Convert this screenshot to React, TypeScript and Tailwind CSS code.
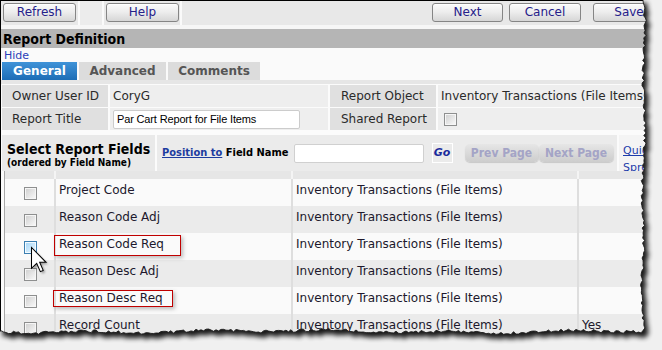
import React from "react";

const rows = [
  { name: "Project Code", extra: "", hover: false },
  { name: "Reason Code Adj", extra: "", hover: false },
  { name: "Reason Code Req", extra: "", hover: true },
  { name: "Reason Desc Adj", extra: "", hover: false },
  { name: "Reason Desc Req", extra: "", hover: false },
  { name: "Record Count", extra: "Yes", hover: false },
];

function makeEdge() {
  let s = 98765;
  const rnd = () => {
    s = (s * 16807) % 2147483647;
    return s / 2147483647;
  };
  const right: string[] = [];
  for (let y = -2; y <= 331; y += 2.5) {
    const x = 643.5 + Math.sin(y / 17) * 1.1 + Math.sin(y / 53) * 0.9 + (rnd() - 0.5) * 3;
    right.push(`${x.toFixed(1)},${y.toFixed(1)}`);
  }
  const bottom: string[] = [];
  for (let x = 641; x >= -3; x -= 2.5) {
    const y = 331.5 + Math.sin(x / 19) * 1.0 + Math.sin(x / 61) * 0.9 + (rnd() - 0.5) * 3;
    bottom.push(`${x.toFixed(1)},${y.toFixed(1)}`);
  }
  const pts = [...right, ...bottom];
  const paper = `M-3,-3 L${pts.join(" L")} L-3,-3 Z`;
  return { paper, pts: pts.join(" ") };
}

const EDGE = makeEdge();

function TornEdge() {
  const outside = `M-20,-20 H700 V380 H-20 Z ${EDGE.paper}`;
  return (
    <svg className="absolute left-0 top-0 pointer-events-none" width="662" height="350" viewBox="0 0 662 350">
      <defs>
        <filter id="blurShadow" filterUnits="userSpaceOnUse" x="-30" y="-30" width="730" height="420">
          <feGaussianBlur stdDeviation="2.5" />
        </filter>
        <clipPath id="outsideClip">
          <path d={outside} clipRule="evenodd" />
        </clipPath>
      </defs>
      <path d={outside} fill="#f0f0f0" fillRule="evenodd" />
      <g clipPath="url(#outsideClip)">
        <path d={EDGE.paper} transform="translate(4,5)" fill="#000" opacity="0.9" filter="url(#blurShadow)" />
      </g>
      <polyline points={EDGE.pts} fill="none" stroke="#1c1c1c" strokeWidth="0.9" />
    </svg>
  );
}

function Checkbox({ hover = false }: { hover?: boolean }) {
  return (
    <div
      className={
        hover
          ? "w-[13px] h-[13px] shrink-0 border border-[#3c7fb1] bg-[#f4fbff] p-[1px]"
          : "w-[13px] h-[13px] shrink-0 border border-[#8e8f8f] bg-[#f6f6f6] p-[1px]"
      }
    >
      <div
        className={
          hover
            ? "w-full h-full bg-gradient-to-br from-[#a9d8f8] to-[#e6f5fe]"
            : "w-full h-full bg-gradient-to-br from-[#d2d2d2] to-[#f7f7f7]"
        }
      />
    </div>
  );
}

function Cursor() {
  return (
    <svg className="absolute left-[29px] top-[246px] pointer-events-none" width="22" height="30" viewBox="0 0 22 30">
      <defs>
        <filter id="curShadow" x="-50%" y="-50%" width="200%" height="200%">
          <feGaussianBlur stdDeviation="0.9" />
        </filter>
      </defs>
      <g transform="translate(2.5,1.5) scale(1.3)">
        <path
          d="M0,0 L0,16 L4,12.2 L6.8,18.6 L9,17.6 L6.3,11.4 L11.2,11.4 Z"
          transform="translate(1.5,1.5)"
          fill="#000"
          opacity="0.35"
          filter="url(#curShadow)"
        />
        <path
          d="M0,0 L0,16 L4,12.2 L6.8,18.6 L9,17.6 L6.3,11.4 L11.2,11.4 Z"
          fill="#fff"
          stroke="#000"
          strokeWidth="0.8"
          strokeLinejoin="miter"
        />
      </g>
    </svg>
  );
}

const btn =
  "h-[19px] shrink-0 rounded-[3px] border border-[#858585] bg-gradient-to-b from-[#fbfbfb] via-[#ececec] to-[#d6d6d6] text-[12px] leading-[17px] text-[#25208a] flex items-center justify-center shadow-[inset_0_1px_0_#ffffff]";

const cond = "font-['DejaVu_Sans_Condensed','DejaVu_Sans',sans-serif] [font-stretch:semi-condensed] font-bold";

export default function App() {
  return (
    <div className="relative w-[662px] h-[350px] overflow-hidden bg-[#f0f0f0] font-['DejaVu_Sans',sans-serif] text-[#1e1e1e]">
      <div className="w-[654px] h-[342px] border-l border-t border-black bg-[#fafafa] flex flex-col overflow-hidden">
        {/* Toolbar */}
        <div className="h-[24px] flex bg-[#e8e8e8] shrink-0">
          <div className="w-[77px] shrink-0 pl-[2px] pt-[2px]">
            <div className={`${btn} w-[73px]`}>Refresh</div>
          </div>
          <div className="w-[2px] shrink-0 bg-[#fafafa]" />
          <div className="w-[22px] shrink-0 bg-[#ececec]" />
          <div className="w-[2px] shrink-0 bg-[#fafafa]" />
          <div className="w-[76px] shrink-0 pl-[2px] pt-[2px]">
            <div className={`${btn} w-[73px]`}>Help</div>
          </div>
          <div className="w-[2px] shrink-0 bg-[#fafafa]" />
          <div className="flex-1 min-w-0 flex pt-[2px] pl-[250px] overflow-hidden">
            <div className={`${btn} w-[71px]`}>Next</div>
            <div className={`${btn} w-[72px] ml-[6px]`}>Cancel</div>
            <div className={`${btn} w-[72px] ml-[12px]`}>Save</div>
          </div>
        </div>
        <div className="h-[4px] bg-[#f6f6f6] shrink-0" />

        {/* Header */}
        <div className="h-[19px] bg-[#b5b5b5] flex items-center pl-[2px] shrink-0">
          <span className={`${cond} text-[14px] text-black leading-none`}>Report Definition</span>
        </div>

        {/* Hide */}
        <div className="h-[14px] pl-[3px] flex items-end bg-[#fafafa] shrink-0">
          <span className="text-[11px] leading-[13px] text-[#2b3fb8]">Hide</span>
        </div>

        {/* Tabs */}
        <div className="h-[18px] flex gap-[2px] pl-[1px] bg-[#fafafa] shrink-0">
          <div className="w-[75px] shrink-0 bg-gradient-to-b from-[#3f93d8] to-[#1c6db6] flex items-center justify-center text-white font-bold text-[12px]">
            General
          </div>
          <div className="w-[87px] shrink-0 bg-[#dcdcdc] flex items-center justify-center text-[#555555] font-bold text-[12px]">
            Advanced
          </div>
          <div className="w-[92px] shrink-0 bg-[#dcdcdc] flex items-center justify-center text-[#555555] font-bold text-[12px]">
            Comments
          </div>
        </div>
        <div className="h-[4px] bg-[#e6e6e6] shrink-0" />

        {/* Form */}
        <div className="bg-[#fbfbfb] p-[1px] flex flex-col gap-[1px] shrink-0">
          <div className="h-[22px] flex gap-[2px] text-[12px]">
            <div className="w-[106px] shrink-0 bg-[#e0e0e0] flex items-center pl-[10px] text-[#2a2a2a]">Owner User ID</div>
            <div className="w-[218px] shrink-0 bg-[#eeeeee] flex items-center pl-[3px] text-[#2a2a2a]">CoryG</div>
            <div className="w-[106px] shrink-0 bg-[#e0e0e0] flex items-center pl-[11px] text-[#2a2a2a]">Report Object</div>
            <div className="flex-1 min-w-0 bg-[#eeeeee] flex items-center pl-[3px] text-[#2a2a2a] whitespace-nowrap overflow-hidden">
              Inventory Transactions (File Items)
            </div>
          </div>
          <div className="h-[22px] flex gap-[2px] text-[12px]">
            <div className="w-[106px] shrink-0 bg-[#e0e0e0] flex items-center pl-[10px] text-[#2a2a2a]">Report Title</div>
            <div className="w-[218px] shrink-0 bg-[#eeeeee] flex items-center pl-[3px]">
              <div className="w-[187px] h-[19px] bg-white border border-[#cccccc] rounded-[2px] flex items-center pl-[3px] font-['Liberation_Sans',sans-serif] text-[11px] tracking-[-0.15px] text-black">
                Par Cart Report for File Items
              </div>
            </div>
            <div className="w-[106px] shrink-0 bg-[#e0e0e0] flex items-center pl-[11px] text-[#2a2a2a]">Shared Report</div>
            <div className="flex-1 min-w-0 bg-[#eeeeee] flex items-center pl-[6px]">
              <Checkbox />
            </div>
          </div>
        </div>
        <div className="h-[4px] bg-[#fbfbfb] shrink-0" />

        {/* Select Report Fields */}
        <div className="h-[36px] flex gap-[2px] px-[1px] bg-[#fbfbfb] shrink-0">
          <div className={`w-[153px] shrink-0 bg-[#e9e9e9] pl-[5px] pt-[7px] flex flex-col ${cond} text-black`}>
            <span className="text-[14px] leading-[15px] whitespace-nowrap">Select Report Fields</span>
            <span className="text-[10px] leading-[12px] whitespace-nowrap">(ordered by Field Name)</span>
          </div>
          <div className="w-[460px] shrink-0 bg-[#ebebeb] flex items-center pl-[5px]">
            <span className={`${cond} text-[11px] whitespace-nowrap`}>
              <span className="underline text-[#1d3c9f]">Position to</span>
              <span className="text-black"> Field Name</span>
            </span>
            <div className="w-[130px] h-[19px] ml-[5px] bg-white border border-[#d0d0d0] rounded-[2px] shrink-0" />
            <div className="w-[21px] h-[20px] ml-[8px] border border-white flex items-center justify-center shrink-0">
              <span className="font-bold italic text-[11px] text-[#1a2a9c]">Go</span>
            </div>
            <div className={`w-[74px] h-[18px] ml-[12px] rounded-[5px] bg-gradient-to-b from-[#e6e6e6] to-[#cdcdcd] flex items-center justify-center shrink-0 ${cond} text-[12px] text-[#a4a4c6] shadow-[0_1px_1px_rgba(0,0,0,0.15)]`}>
              Prev Page
            </div>
            <div className={`w-[75px] h-[18px] rounded-[5px] bg-gradient-to-b from-[#e6e6e6] to-[#cdcdcd] flex items-center justify-center shrink-0 ${cond} text-[12px] text-[#a4a4c6] shadow-[0_1px_1px_rgba(0,0,0,0.15)]`}>
              Next Page
            </div>
          </div>
          <div className="flex-1 min-w-0 overflow-hidden bg-[#f4f4f4] pl-[4px] pt-[7px] flex flex-col text-[11px] leading-[17px] text-[#1d3caa] whitespace-nowrap">
            <span className="underline">Quick</span>
            <span className="underline">Spreadsheet</span>
          </div>
        </div>

        {/* Table */}
        <div className="ml-[3px] border-l border-[#a8a8a8] flex flex-col">
          <div className="h-[8px] flex bg-[#e6e6e6]">
            <div className="w-[51px] shrink-0 border-r-2 border-[#f4f4f4]" />
            <div className="w-[237px] shrink-0 border-r-2 border-[#f4f4f4]" />
            <div className="w-[286px] shrink-0 border-r-2 border-[#f4f4f4]" />
            <div className="flex-1" />
          </div>
          {rows.map((r, i) => (
            <div key={r.name} className={i % 2 === 0 ? "h-[27px] flex bg-[#fafafa] text-[12px]" : "h-[27px] flex bg-[#ebebeb] text-[12px]"}>
              <div className="w-[51px] shrink-0 border-r-2 border-[#dedede] flex justify-center pt-[8px] pl-[2px]">
                <Checkbox hover={r.hover} />
              </div>
              <div className="w-[237px] shrink-0 border-r-2 border-[#dedede] pl-[3px] pt-[3px] leading-[16px] text-[#20182c] whitespace-nowrap">
                {r.name}
              </div>
              <div className="w-[286px] shrink-0 border-r-2 border-[#dedede] pl-[3px] pt-[3px] leading-[16px] text-[#20182c] whitespace-nowrap">
                Inventory Transactions (File Items)
              </div>
              <div className="flex-1 min-w-0 pl-[3px] pt-[3px] leading-[16px] text-[#20182c]">{r.extra}</div>
            </div>
          ))}
        </div>
      </div>

      {/* Red highlight boxes */}
      <div className="absolute left-[54px] top-[235px] w-[127px] h-[21px] border border-[#c00000] shadow-[2px_2px_4px_rgba(0,0,0,0.25)] pointer-events-none" />
      <div className="absolute left-[53px] top-[290px] w-[120px] h-[17px] border border-[#c00000] shadow-[2px_2px_4px_rgba(0,0,0,0.25)] pointer-events-none" />

      <Cursor />
      <TornEdge />
    </div>
  );
}
